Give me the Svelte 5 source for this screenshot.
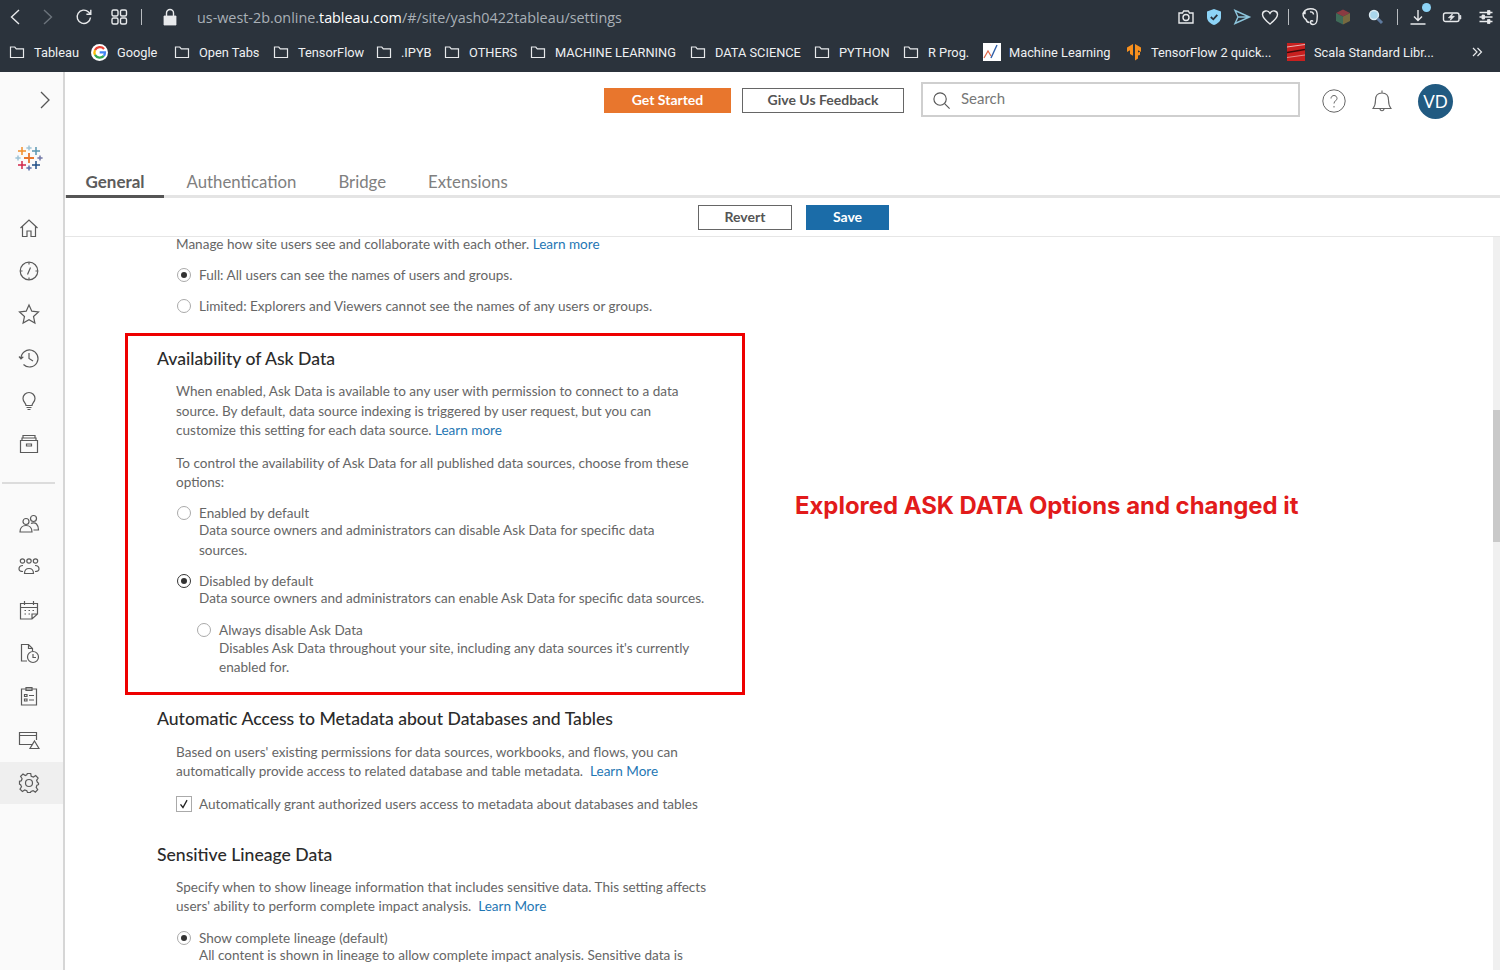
<script lang="ts">
	const bookmarks = [
		{ label: 'Tableau', icon: 'folder', width: 82 },
		{ label: 'Google', icon: 'google', width: 83 },
		{ label: 'Open Tabs', icon: 'folder', width: 99 },
		{ label: 'TensorFlow', icon: 'folder', width: 103 },
		{ label: '.IPYB', icon: 'folder', width: 68 },
		{ label: 'OTHERS', icon: 'folder', width: 86 },
		{ label: 'MACHINE LEARNING', icon: 'folder', width: 160 },
		{ label: 'DATA SCIENCE', icon: 'folder', width: 124 },
		{ label: 'PYTHON', icon: 'folder', width: 89 },
		{ label: 'R Prog.', icon: 'folder', width: 80 },
		{ label: 'Machine Learning', icon: 'chart', width: 142 },
		{ label: 'TensorFlow 2 quick...', icon: 'tf', width: 162 },
		{ label: 'Scala Standard Libr...', icon: 'scala', width: 150 }
	];

	const tabs = ['General', 'Authentication', 'Bridge', 'Extensions'];

	const crosses = [
		{ x: 28, y: 10, r: 5, c: '#e8762d' },
		{ x: 21, y: 3, r: 4, c: '#f28e2b' },
		{ x: 28, y: 0, r: 2.6, c: '#9ec3d6' },
		{ x: 35, y: 3, r: 4, c: '#5b97b1' },
		{ x: 17, y: 10, r: 2.6, c: '#9ec3d6' },
		{ x: 39, y: 10, r: 2.6, c: '#7277a6' },
		{ x: 21, y: 17, r: 4, c: '#d1294b' },
		{ x: 28, y: 20, r: 2.6, c: '#5c6fa8' },
		{ x: 35, y: 17, r: 4, c: '#1f4e87' }
	];
</script>

<div class="page">
	<div class="chrome">
		<div class="addr">
			<svg class="ic back" viewBox="0 0 20 20"><path d="M14 3 6.500 10 14 17" /></svg>
			<svg class="ic fwd" viewBox="0 0 20 20"><path d="M6 3 13.500 10 6 17" /></svg>
			<svg class="ic reload" viewBox="0 0 20 20"><path d="M16.500 10.500A6.700 6.700 0 1 1 14.500 5L16.500 7M16.800 2.800V7.200H12.400" /></svg>
			<svg class="ic grid" viewBox="0 0 20 20"><rect x="3" y="3" width="6" height="6" rx="1.500" /><rect x="11.500" y="3" width="6" height="6" rx="1.500" /><rect x="3" y="11" width="6" height="6" rx="1.500" /><rect x="11.500" y="11" width="6" height="6" rx="1.500" /></svg>
			<span class="sep first"></span>
			<svg class="ic lock" viewBox="0 0 20 20"><path class="solid" d="M4 9h12v9H4z" /><path d="M6.500 9V6a3.500 3.500 0 0 1 7 0v3" /></svg>
			<div class="url">us-west-2b.online.<b>tableau.com</b>/#/site/yash0422tableau/settings</div>
			<div class="ext">
				<svg class="ic" viewBox="0 0 20 20"><path d="M3 6h3.500l1.200-2h4.600l1.200 2H17v10H3z" /><circle cx="10" cy="10.500" r="3" /></svg>
				<svg class="ic" viewBox="0 0 20 20"><path class="shield" d="M10 2 17 4.500V10c0 4-3 6.500-7 8-4-1.500-7-4-7-8V4.500z" /><path class="tick" d="M6.800 10 9.300 12.300 13.300 7.800" /></svg>
				<svg class="ic send" viewBox="0 0 20 20"><path d="M3 3.500 17.500 10 3 16.500 6 10zM6 10h11" /></svg>
				<svg class="ic" viewBox="0 0 20 20"><path d="M10 17C5 13 2.500 10.500 2.500 7.500 2.500 3.500 8 2.500 10 6.300 12 2.500 17.500 3.500 17.500 7.500 17.500 10.500 15 13 10 17z" /></svg>
				<span class="sep"></span>
				<svg class="ic elephant" viewBox="0 0 20 20"><path d="M5 3.500C8 1 13 1.500 15.500 3c2 1.500 2 6 1.500 10-.3 3-2 4.500-4 4.500-1.500 0-2.500-1-2.500-2.500s2-1.500 2.500-.5M5 3.500 3 6.500c0 3 1 5 3 6 .5 2 2 3 3.500 3M5 3.500V6.500H3M10 5c2-.5 3.500.5 3.500 2.500" /></svg>
				<svg class="ic flat wide" viewBox="0 0 20 20"><path fill="#8a3a42" d="M10 2.500 17 6 10 9.500 3 6z" /><path fill="#3f6b58" d="M3 6 10 9.500V17.500L3 14z" /><path fill="#77693f" d="M17 6 10 9.500V17.500L17 14z" /></svg>
				<svg class="ic flat wide" viewBox="0 0 20 20"><circle cx="8" cy="8" r="4.500" fill="#a9d6ec" stroke="#dcebf3" /><path stroke="#5e7a9e" stroke-width="3" d="M11.500 11.500 16 16" /></svg>
				<span class="sep sep2"></span>
				<svg class="ic dl" viewBox="0 0 20 20"><path d="M10 3v10M6 9.500 10 13.500 14 9.500M2.500 17h15" /></svg>
				<svg class="ic wider" viewBox="0 0 20 20"><rect x="1.500" y="6" width="15.500" height="8.500" rx="2" /><path class="solid" d="M17.800 8.500h1v3.500h-1zM10.500 6.800 6.500 10.800h2.800l-1 2.500 4-4H9.500z" /></svg>
				<svg class="ic wider" viewBox="0 0 20 20"><path d="M3.500 5.500h13M3.500 10h13M3.500 14.500h13" /><path class="solid" d="M11.500 3.500h2.500v4h-2.500zM6 8h2.500v4H6zM11.500 12.500h2.500v4h-2.500z" /></svg>
				<span class="dot"></span>
			</div>
		</div>
		<div class="bookmarks">
			{#each bookmarks as b}
				<div class="bm" style="width:{b.width}px">
					{#if b.icon === 'folder'}
						<svg class="ic small" viewBox="0 0 16 16"><path d="M1.500 3h4.300l1.500 1.800h7.200v8.700H1.500z" /></svg>
					{:else if b.icon === 'google'}
						<svg class="glogo" viewBox="0 0 18 18">
							<circle cx="9" cy="9" r="9" fill="#fff" />
							<path d="M13.800 5.200A6 6 0 0 0 4.200 6.500" stroke="#ea4335" />
							<path d="M4.200 6.500A6 6 0 0 0 4.200 11.500" stroke="#fbbc05" />
							<path d="M4.200 11.500A6 6 0 0 0 13.600 12.600" stroke="#34a853" />
							<path d="M13.600 12.600A6 6 0 0 0 14.800 8.800H9.200" stroke="#4285f4" />
						</svg>
					{:else if b.icon === 'chart'}
						<svg class="square" viewBox="0 0 18 18">
							<rect width="18" height="18" fill="#fff" />
							<path d="M1 15 5 8 8 13" fill="none" stroke="#e2694a" stroke-width="1.200" />
							<path d="M8 15 14 2" fill="none" stroke="#2f5fa8" stroke-width="1.400" />
						</svg>
					{:else if b.icon === 'tf'}
						<svg class="square" viewBox="0 0 18 18">
							<path fill="#f7901e" d="M8 1 2 4.500V9L5 7.300V11L8 12.800V17.500zM10 1 16 4.500V9L13 7.300V9.500L15 8.800V12L13 12.500V15.500L10 17.500z" />
						</svg>
					{:else}
						<svg class="scala" viewBox="0 0 18 18">
							<rect width="18" height="18" fill="#c8201f" />
							<path d="M0 4 18 1.500" stroke="#f3d9d9" stroke-width="0.800" />
							<path d="M0 9.500 18 6.500" stroke="#3a0c0c" stroke-width="1.400" />
							<path d="M0 14.500 18 12" stroke="#f3d9d9" stroke-width="0.600" />
						</svg>
					{/if}
					<span>{b.label}</span>
				</div>
			{/each}
			<svg class="ic more" viewBox="0 0 12 12"><path d="M2 2 6 6 2 10M6.500 2 10.500 6 6.500 10" /></svg>
		</div>
	</div>

	<div class="app">
		<aside class="sidebar">
			<svg class="toggle" viewBox="0 0 14 20"><path d="M3 2 11 10 3 18" /></svg>
			<svg class="logo" viewBox="14 -4 28 28">
				{#each crosses as k}
					<path d="M{k.x - k.r} {k.y}H{k.x + k.r}M{k.x} {k.y - k.r}V{k.y + k.r}" stroke={k.c} stroke-width={k.r > 4 ? 1.800 : 1.500} fill="none" />
				{/each}
			</svg>
			<nav class="nav">
				<svg viewBox="0 0 22 22"><path d="M2.500 11 11 3 19.500 11M4.500 9.500V19.500H9V14H13V19.500H17.500V9.500" /></svg>
				<svg viewBox="0 0 22 22"><circle cx="11" cy="11" r="8.800" /><path d="M12.500 7.500 9.500 14.500M11 2.500V4.500M11 17.500V19.500M2.500 11H4.500M17.500 11H19.500" /></svg>
				<svg viewBox="0 0 22 22"><path d="M11 2 13.800 8.200 20.500 9 15.500 13.500 16.900 20 11 16.700 5.100 20 6.500 13.500 1.500 9 8.200 8.200z" /></svg>
				<svg viewBox="0 0 22 22"><path d="M3 11.500A8.500 8.500 0 1 1 5.500 17.500M1 9.500 3 11.800 5.300 9.800M11 6V11.500L15 14" /></svg>
				<svg viewBox="0 0 22 22"><path d="M8 15.500C8 13 5 12 5 8.500A6 6 0 0 1 17 8.500C17 12 14 13 14 15.500zM8.500 17.500H13.500M9.500 19.500H12.500" /></svg>
				<svg viewBox="0 0 22 22"><path d="M2.500 7.500H19.500V19.500H2.500zM4 5H18V7.500H4zM5 2.500H17V5H5zM8.500 11H13.500V13H8.500z" /></svg>
				<span class="rule"></span>
				<svg viewBox="0 0 22 22"><circle cx="8" cy="8.500" r="3" /><path d="M2 19c0-4 2.500-6.500 6-6.500s6 2.500 6 6.500z" /><circle cx="15.500" cy="5.500" r="3" /><path d="M13 10.500c1-.7 4-1 5.500.5 1.500 1.500 2 3.500 2 6h-5" /></svg>
				<svg viewBox="0 0 22 22"><circle cx="4.500" cy="5" r="2.200" /><circle cx="11" cy="5" r="2.200" /><circle cx="17.500" cy="5" r="2.200" /><path d="M6.500 17.500c0-3 1.500-5 4.500-5s4.500 2 4.500 5zM1 13c0-2 1.500-3.500 4-3.500M21 13c0-2-1.500-3.500-4-3.500M1 13c0 2 1.500 2.500 4 2.500M21 13c0 2-1.500 2.500-4 2.500" /></svg>
				<svg viewBox="0 0 22 22"><path d="M2.500 4.500H19.500V15L14 20H2.500zM2.500 8.500H19.500M6.500 2V6M15.500 2V6M14 20V15H19.500M6.500 11.500H8M10.500 11.500H12M14.500 11.500H16M6.500 15H8M10.500 15H12" /></svg>
				<svg viewBox="0 0 22 22"><path d="M9 19H3.500V2.500H10.500L14.500 6.500V9M10.500 2.500V6.500H14.500" /><circle cx="15" cy="15" r="5.500" /><path d="M15 12V15.500H18" /></svg>
				<svg viewBox="0 0 22 22"><path d="M3.500 4H18.500V20H3.500zM8 4V2.500H14V5.500H8zM6.500 9.500H9V11.500H6.500zM6.500 14H9V16H6.500zM11 10.500H16M11 15H16" /></svg>
				<svg viewBox="0 0 22 22"><path d="M14 15.500H1.500V3.500H18.500V11M1.500 6.500H18.500M16.500 12 21 19.500H12z" /></svg>
				<div class="selected">
					<svg viewBox="0 0 22 22"><circle cx="11" cy="11" r="3.500" /><path d="M9.300 1.500H12.700L13.200 4.200 15.400 5.100 17.700 3.600 20.100 6 18.600 8.300 19.500 10.500 20.500 11V12.700L18.900 13.300 18.200 15.400 19.700 17.700 17.300 20.100 15.100 18.600 13 19.500 12.500 20.500H9.500L8.800 18.800 6.700 18 4.400 19.500 2 17.100 3.500 14.800 2.600 12.700 1.500 12.200V9.300L3.300 8.800 4.100 6.700 2.600 4.400 5 2 7.300 3.500 8.800 2.800z" /></svg>
				</div>
			</nav>
		</aside>

		<main class="main">
			<header class="head">
				<button class="btn orange">Get Started</button>
				<button class="btn outline">Give Us Feedback</button>
				<div class="search">
					<svg viewBox="0 0 20 20"><circle cx="8.500" cy="8.500" r="6.500" /><path d="M13.300 13.300 18.500 18.500" /></svg>
					<span>Search</span>
				</div>
				<svg class="help" viewBox="0 0 24 24"><circle cx="12" cy="12" r="11.200" /><path d="M9 9.500C9 5.500 15 5.500 15 9.500 15 11.500 12 12 12 14.500M12 17V18.500" /></svg>
				<svg class="bell" viewBox="0 0 22 26"><path d="M2 20.500C4 18 4.500 16 4.500 12 4.500 7.500 7 5 11 5s6.500 2.500 6.500 7c0 4 .5 6 2.500 8.500zM11 5V2.500M9 20.500C9 23.500 13 23.500 13 20.500" /></svg>
				<div class="avatar">VD</div>
			</header>

			<div class="tabs">
				{#each tabs as t, i}
					<div class="tab" class:active={i === 0}>{t}</div>
				{/each}
			</div>

			<div class="actions">
				<button class="btn revert">Revert</button>
				<button class="btn save">Save</button>
			</div>

			<div class="scroller">
				<div class="column">
					<section class="block intro">
						<p class="text">Manage how site users see and collaborate with each other. <a href="#top">Learn more</a></p>
						<div class="opt single"><span class="radio on soft"></span><span>Full: All users can see the names of users and groups.</span></div>
						<div class="opt single"><span class="radio"></span><span>Limited: Explorers and Viewers cannot see the names of any users or groups.</span></div>
					</section>

					<section class="block boxed">
						<h2>Availability of Ask Data</h2>
						<p class="text">When enabled, Ask Data is available to any user with permission to connect to a data<br />source. By default, data source indexing is triggered by user request, but you can<br />customize this setting for each data source. <a href="#top">Learn more</a></p>
						<p class="text second">To control the availability of Ask Data for all published data sources, choose from these<br />options:</p>
						<div class="opt first-opt"><span class="radio"></span><div><div class="lab">Enabled by default</div><div class="desc">Data source owners and administrators can disable Ask Data for specific data<br />sources.</div></div></div>
						<div class="opt"><span class="radio on"></span><div><div class="lab">Disabled by default</div><div class="desc">Data source owners and administrators can enable Ask Data for specific data sources.</div></div></div>
						<div class="opt nested"><span class="radio"></span><div><div class="lab">Always disable Ask Data</div><div class="desc">Disables Ask Data throughout your site, including any data sources it's currently<br />enabled for.</div></div></div>
					</section>

					<section class="block meta">
						<h2>Automatic Access to Metadata about Databases and Tables</h2>
						<p class="text">Based on users' existing permissions for data sources, workbooks, and flows, you can<br />automatically provide access to related database and table metadata.&nbsp; <a href="#top">Learn More</a></p>
						<div class="opt single check-row">
							<span class="check"><svg viewBox="0 0 16 16"><path d="M4 8.500 6.800 12 11.500 3.500" /></svg></span>
							<span>Automatically grant authorized users access to metadata about databases and tables</span>
						</div>
					</section>

					<section class="block lineage">
						<h2>Sensitive Lineage Data</h2>
						<p class="text">Specify when to show lineage information that includes sensitive data. This setting affects<br />users' ability to perform complete impact analysis.&nbsp; <a href="#top">Learn More</a></p>
						<div class="opt"><span class="radio on soft"></span><div><div class="lab">Show complete lineage (default)</div><div class="desc">All content is shown in lineage to allow complete impact analysis. Sensitive data is</div></div></div>
					</section>
				</div>

				<div class="note">Explored ASK DATA Options and changed it</div>
				<div class="track"><div class="thumb"></div></div>
			</div>
		</main>
	</div>
</div>

<style>
	:global(body) {
		margin: 0;
		background: #fff;
	}

	.page {
		width: 1500px;
		height: 970px;
		overflow: hidden;
		display: flex;
		flex-direction: column;
		font-family: Lato, sans-serif;
	}

	/* browser chrome */
	.chrome {
		height: 72px;
		background: #2b333c;
		color: #eef0f2;
		font-family: Roboto, sans-serif;
		flex-shrink: 0;
	}

	.addr {
		height: 34px;
		display: flex;
		align-items: center;
		position: relative;
	}

	.ic {
		width: 20px;
		height: 20px;
		fill: none;
		stroke: #e8eaec;
		stroke-width: 1.400;
		flex-shrink: 0;
	}

	.ic .solid {
		fill: #e8eaec;
		stroke-width: 0.800;
	}

	.back {
		margin-left: 5px;
	}

	.fwd {
		margin-left: 13px;
		stroke: #6c747c;
	}

	.reload {
		margin-left: 16px;
	}

	.grid {
		margin-left: 15px;
	}

	.sep {
		width: 1px;
		height: 16px;
		background: #b8bcc0;
		flex-shrink: 0;
	}

	.sep.first {
		margin-left: 12px;
	}

	.lock {
		margin-left: 18px;
	}

	.url {
		margin-left: 17px;
		font-family: 'Open Sans', sans-serif;
		font-size: 14.350px;
		color: #a9b0b7;
		white-space: nowrap;
	}

	.url b {
		font-weight: 400;
		color: #fff;
	}

	.ext {
		margin-left: auto;
		display: flex;
		align-items: center;
		gap: 8px;
		padding-right: 4px;
		position: relative;
	}

	.elephant {
		margin-left: 3px;
	}

	.wide {
		margin-left: 5px;
	}

	.sep2 {
		margin-left: 3px;
	}

	.dl {
		margin-left: 2px;
	}

	.wider {
		margin-left: 6px;
	}

	.shield {
		fill: #8dd4f7;
		stroke: none;
	}

	.tick {
		stroke: #2b333c;
		stroke-width: 1.800;
	}

	.send {
		stroke: #8dc5dc;
	}

	.flat {
		stroke: none;
	}

	.dot {
		position: absolute;
		right: 69px;
		top: -4px;
		width: 9px;
		height: 9px;
		border-radius: 50%;
		background: #8dd4f7;
	}

	.bookmarks {
		height: 36px;
		display: flex;
		align-items: center;
		padding-left: 9px;
		font-size: 12.800px;
	}

	.bm {
		display: flex;
		align-items: center;
		gap: 9px;
		white-space: nowrap;
		flex-shrink: 0;
	}

	.ic.small {
		width: 16px;
		height: 16px;
		stroke-width: 1.200;
	}

	.glogo {
		width: 17px;
		height: 17px;
		fill: none;
		stroke-width: 2.400;
	}

	.square,
	.scala {
		width: 18px;
		height: 18px;
		flex-shrink: 0;
	}

	.square {
		margin-right: -1px;
	}

	.ic.more {
		width: 12px;
		height: 12px;
		margin-left: 34px;
		stroke-width: 1.200;
	}

	/* app shell */
	.app {
		flex: 1;
		display: flex;
		min-height: 0;
	}

	.sidebar {
		width: 63px;
		background: #fafafa;
		border-right: 2px solid #d6d6d6;
		flex-shrink: 0;
		display: flex;
		flex-direction: column;
		position: relative;
	}

	.toggle {
		width: 14px;
		height: 20px;
		fill: none;
		stroke: #555;
		stroke-width: 1.300;
		margin: 18px 0 0 38px;
	}

	.logo {
		width: 28px;
		height: 28px;
		margin: 34px 0 0 15px;
	}

	.nav {
		display: flex;
		flex-direction: column;
		margin-top: 45px;
		align-items: stretch;
	}

	.nav svg {
		width: 22px;
		height: 22px;
		margin: 0 0 21.200px 18px;
		fill: none;
		stroke: #5a5a5a;
		stroke-width: 1.200;
		flex-shrink: 0;
	}

	.rule {
		height: 2px;
		background: #dcdcdc;
		margin: 6px 8px 28.500px 2px;
	}

	.selected {
		background: #efefef;
		height: 42px;
		margin-top: -9.500px;
		display: flex;
		align-items: center;
	}

	.selected svg {
		margin-bottom: 0;
	}

	.main {
		flex: 1;
		min-width: 0;
		display: flex;
		flex-direction: column;
		color: #666;
	}

	.head {
		height: 58px;
		display: flex;
		align-items: flex-start;
		padding-left: 539px;
		padding-top: 10px;
		box-sizing: border-box;
		flex-shrink: 0;
	}

	.btn {
		font-family: Lato, sans-serif;
		font-size: 14px;
		font-weight: 700;
		cursor: pointer;
		padding: 0 0 2px;
		box-sizing: border-box;
	}

	.orange {
		width: 127px;
		height: 25px;
		margin-top: 6px;
		background: #e8762d;
		color: #fff;
		border: 0;
	}

	.outline {
		width: 162px;
		height: 25px;
		margin: 6px 0 0 11px;
		background: #fff;
		color: #555;
		border: 1px solid #666;
	}

	.search {
		width: 379px;
		height: 35px;
		box-sizing: border-box;
		margin-left: 17px;
		border: 2px solid #cfcfcf;
		display: flex;
		align-items: center;
		padding: 0 0 4px 9px;
		gap: 10px;
		font-size: 15px;
		color: #777;
	}

	.search svg {
		width: 19px;
		height: 19px;
		margin-top: 6px;
		fill: none;
		stroke: #555;
		stroke-width: 1.200;
	}

	.help {
		width: 24px;
		height: 24px;
		margin: 7px 0 0 22px;
		fill: none;
		stroke: #666;
		stroke-width: 1;
	}

	.bell {
		width: 22px;
		height: 26px;
		margin: 6px 0 0 25px;
		fill: none;
		stroke: #666;
		stroke-width: 1.100;
	}

	.avatar {
		width: 35px;
		height: 35px;
		border-radius: 50%;
		background: #215a81;
		color: #fff;
		font-size: 17px;
		display: flex;
		align-items: center;
		justify-content: center;
		margin: 2px 0 0 25px;
	}

	.tabs {
		height: 68px;
		box-sizing: border-box;
		display: flex;
		align-items: flex-end;
		gap: 3px;
		border-bottom: 3px solid #e4e4e4;
		padding-left: 1px;
		flex-shrink: 0;
	}

	.tab {
		font-size: 16.800px;
		height: 31px;
		line-height: 30px;
		padding: 0 19.500px;
		margin-bottom: -3px;
		box-sizing: border-box;
		color: #808080;
	}

	.tab.active {
		color: #5c5c5c;
		font-size: 17px;
		line-height: 29px;
		font-weight: 700;
		border-bottom: 3px solid #555;
	}

	.actions {
		height: 39px;
		box-sizing: border-box;
		border-bottom: 1px solid #e6e6e6;
		display: flex;
		padding: 7px 0 0 633px;
		gap: 14px;
		flex-shrink: 0;
	}

	.revert {
		width: 94px;
		height: 25px;
		background: #fff;
		color: #555;
		border: 1px solid #666;
	}

	.save {
		width: 83px;
		height: 25px;
		background: #1b6ca8;
		color: #fff;
		border: 0;
	}

	.scroller {
		flex: 1;
		min-height: 0;
		overflow: hidden;
		position: relative;
		font-size: 13.550px;
	}

	.column {
		width: 620px;
		margin-left: 60px;
	}

	.block {
		padding: 0 32px;
	}

	.text {
		margin: 0 0 0 19px;
		line-height: 19.500px;
		white-space: nowrap;
	}

	.intro .text {
		line-height: 14px;
	}

	.text a {
		color: #1f77b4;
		text-decoration: none;
	}

	h2 {
		margin: 0;
		font-size: 17.600px;
		font-weight: 500;
		color: #2b2b2b;
		line-height: 22px;
	}

	.boxed {
		margin-top: 17.500px;
		border: 3px solid #ee0000;
		height: 362px;
		box-sizing: border-box;
		padding: 12px 29px 0;
	}

	.boxed h2 {
		margin-bottom: 12px;
	}

	.second {
		margin-top: 13px;
	}

	.opt {
		display: flex;
		gap: 8px;
		margin: 12.600px 0 0 20px;
		white-space: nowrap;
	}

	.opt.first-opt {
		margin-top: 12.400px;
	}

	.opt.nested {
		margin-top: 13.200px;
	}

	.opt.single {
		align-items: center;
		line-height: 19px;
		margin-top: 12px;
	}

	.text + .opt.single {
		margin-top: 14.500px;
	}

	.opt .lab {
		line-height: 16.500px;
	}

	.opt .desc {
		line-height: 19.500px;
	}

	.nested {
		margin-left: 40px;
	}

	.radio {
		width: 14px;
		height: 14px;
		border: 1px solid #aaa;
		border-radius: 50%;
		box-sizing: border-box;
		flex-shrink: 0;
		margin-top: 1px;
		position: relative;
		background: #fff;
	}

	.opt.single .radio {
		margin-top: 0;
	}

	.radio.on {
		border: 1.500px solid #333;
	}

	.radio.on.soft {
		border: 1px solid #aaa;
	}

	.radio.on::after {
		content: '';
		position: absolute;
		inset: 3px;
		background: #333;
		border-radius: 50%;
	}

	.meta {
		margin-top: 13px;
	}

	.meta h2 {
		margin-bottom: 12.700px;
	}

	.lineage h2 {
		margin-bottom: 12px;
	}

	.check-row {
		margin-left: 19px;
		gap: 7px;
	}

	.text + .opt.check-row {
		margin-top: 13.300px;
	}

	.check {
		width: 16px;
		height: 16px;
		border: 1px solid #aaa;
		box-sizing: border-box;
		background: #fff;
		flex-shrink: 0;
	}

	.check svg {
		display: block;
		fill: none;
		stroke: #222;
		stroke-width: 1.500;
	}

	.lineage {
		margin-top: 30px;
	}

	.note {
		position: absolute;
		left: 730px;
		top: 254px;
		color: #e21b1b;
		font-family: Inter, sans-serif;
		font-weight: 700;
		font-size: 23.900px;
		white-space: nowrap;
	}

	.track {
		position: absolute;
		right: 0;
		top: 0;
		bottom: 0;
		width: 7px;
		background: #f0f0f0;
	}

	.thumb {
		margin-top: 173px;
		height: 132px;
		background: #c9c9c9;
	}
</style>
